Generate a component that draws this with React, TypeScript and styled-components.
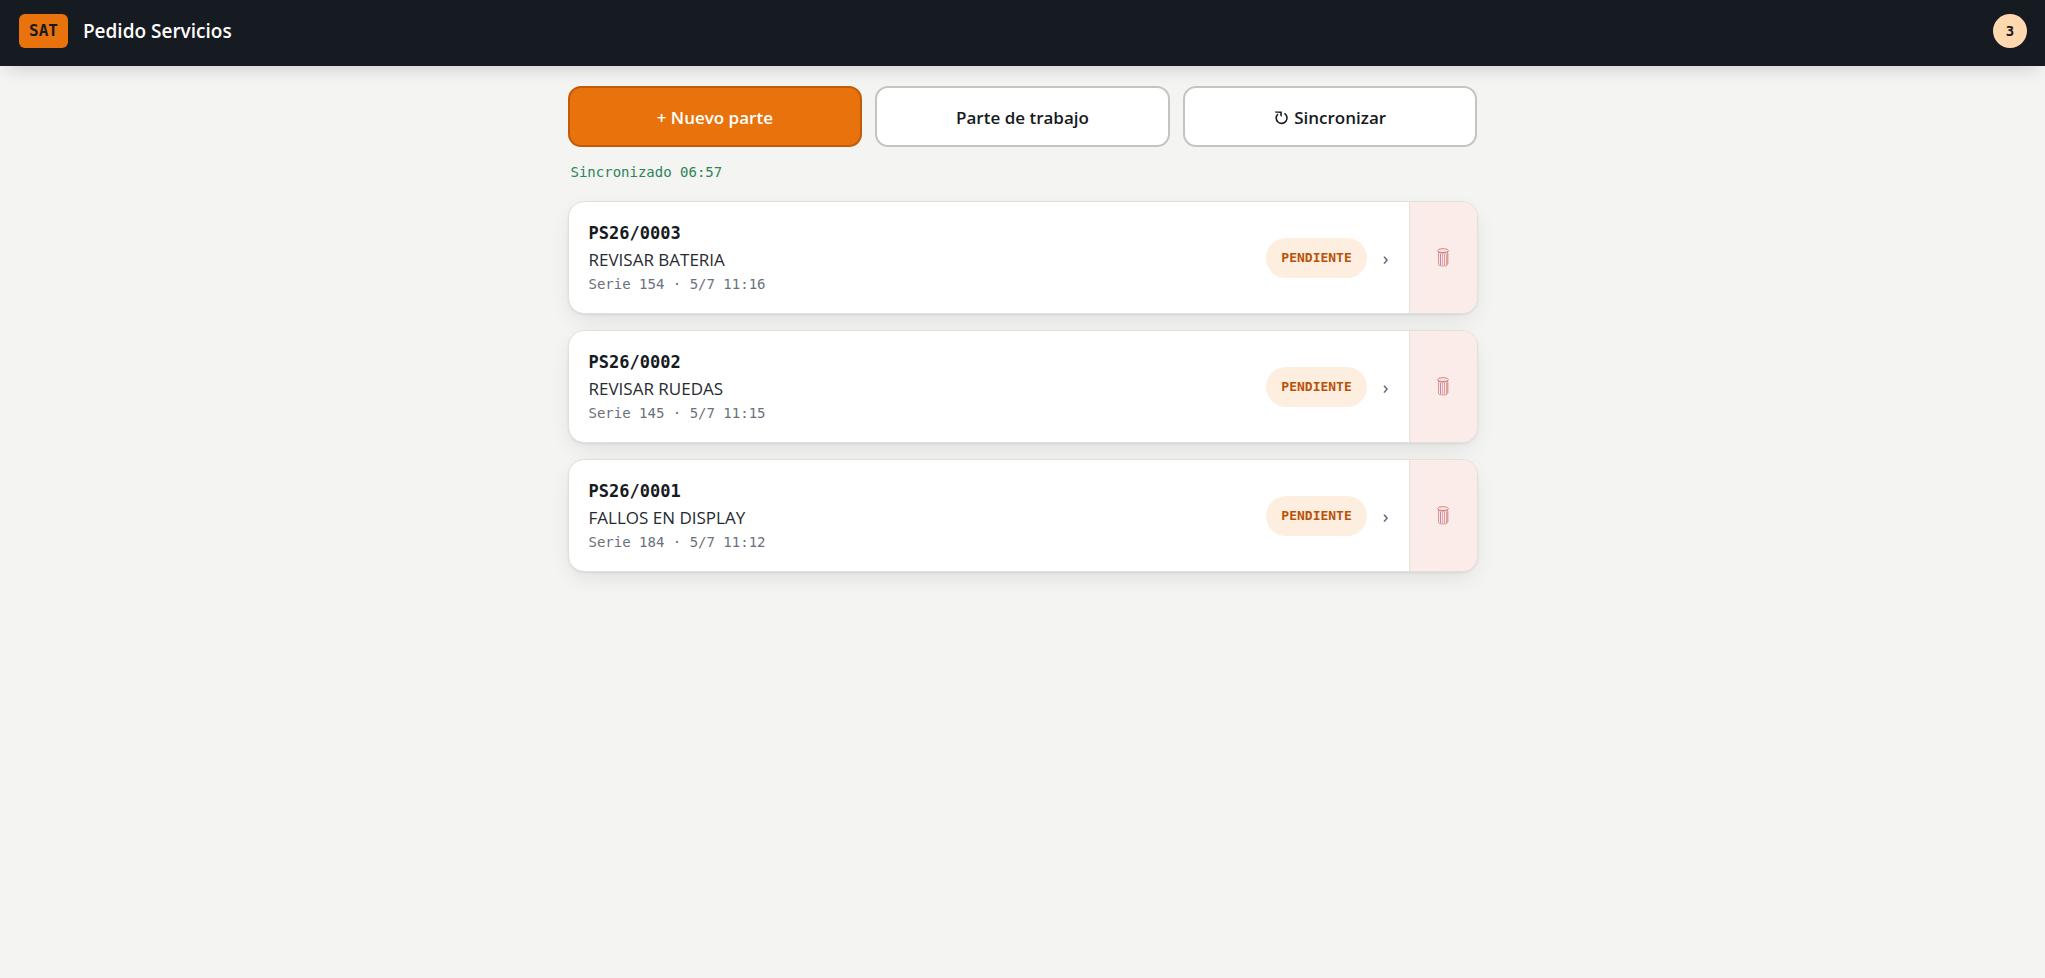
import React from "react";
import styled, { createGlobalStyle } from "styled-components";

const sans = `"Open Sans", "Noto Sans", sans-serif`;
const mono = `"DejaVu Sans Mono", "Liberation Mono", monospace`;

const GlobalStyle = createGlobalStyle`
  *, *::before, *::after { box-sizing: border-box; }
  body { margin: 0; background: #f4f4f2; color: #161a21; font-family: ${sans}; }
  button { font: inherit; color: inherit; cursor: pointer; }
`;

const Header = styled.header`
  display: flex;
  align-items: center;
  gap: 15px;
  padding: 13px 18px 17px 19px;
  background: #161a21;
  box-shadow: 0 8px 20px -8px rgba(22, 26, 33, 0.22);
`;

const Logo = styled.span`
  padding: 0 10px;
  border-radius: 6px;
  background: #e8730c;
  color: #161a21;
  font: 700 16px/34px ${mono};
`;

const AppTitle = styled.h1`
  flex: 1;
  margin: 0;
  color: #fff;
  font-size: 19px;
  font-weight: 600;
  line-height: 36px;
`;

const Counter = styled.span`
  width: 34px;
  border-radius: 50%;
  background: #ffd8b0;
  color: #161a21;
  font: 700 14px/34px ${mono};
  text-align: center;
`;

const Main = styled.main`
  max-width: 912px;
  margin: 0 auto;
  padding: 20px 1px;
`;

const Actions = styled.div`
  display: grid;
  grid-template-columns: repeat(3, 1fr);
  gap: 13px;
`;

const ActionButton = styled.button<{ $primary?: boolean }>`
  display: flex;
  align-items: center;
  justify-content: center;
  gap: 5px;
  padding: 17px 16px 15px;
  border: 2px solid ${(p) => (p.$primary ? "#c25a08" : "#c2c6bf")};
  border-radius: 13px;
  background: ${(p) => (p.$primary ? "#e8730c" : "#fff")};
  color: ${(p) => (p.$primary ? "#fff" : "#161a21")};
  font-size: 17px;
  font-weight: 600;
  line-height: 25px;
`;

const SyncStatus = styled.p`
  margin: 14px 3px 18px;
  color: #2c8457;
  font: 400 14px/22px ${mono};
`;

const OrderList = styled.ul`
  display: flex;
  flex-direction: column;
  gap: 16px;
  margin: 0;
  padding: 0;
  list-style: none;
`;

const OrderCard = styled.li`
  display: flex;
  overflow: hidden;
  border: 1px solid #dfe1dc;
  border-radius: 16px;
  background: #fff;
  box-shadow: 0 1px 2px rgba(22, 26, 33, 0.08), 0 8px 24px -6px rgba(22, 26, 33, 0.12);
`;

const OrderOpen = styled.button`
  display: flex;
  flex: 1;
  align-items: center;
  padding: 18px 20px;
  border: 0;
  background: none;
  text-align: left;
`;

const OrderText = styled.span`
  display: flex;
  flex: 1;
  flex-direction: column;
`;

const OrderNumber = styled.span`
  font: 700 17px/26px ${mono};
`;

const OrderSubject = styled.span`
  color: #262a31;
  font-size: 17px;
  line-height: 28px;
`;

const OrderMeta = styled.span`
  color: #6a707c;
  font: 400 14px/21px ${mono};
`;

const StatusPill = styled.span`
  padding: 0 15px;
  border-radius: 20px;
  background: #fdeee0;
  color: #b95208;
  font: 700 13px/40px ${mono};
`;

const Chevron = styled.span`
  padding-left: 16px;
  color: #565c68;
  font-size: 19px;
  line-height: 28px;
`;

const DeleteButton = styled.button`
  display: flex;
  align-items: center;
  justify-content: center;
  width: 68px;
  border: 0;
  border-left: 1px solid #e3e3df;
  background: #fbebe9;
`;

const SyncIcon = () => (
  <svg width="15" height="16" viewBox="0 0 15 16" fill="none" aria-hidden="true">
    <path d="M10.4 3.4A5.4 5.4 0 1 1 4 4" stroke="currentColor" strokeWidth="1.6" />
    <path d="M1 1.5h6.8v5.6L6.2 5.6V3L1 2.6z" fill="currentColor" />
  </svg>
);

const TrashIcon = () => (
  <svg width="12" height="19" viewBox="0 0 12 19" fill="none" aria-hidden="true">
    <path d="M1.5 4.5v12c0 2 9 2 9 0v-12" fill="#f9e4e3" stroke="#d99a90" />
    <path d="M3.5 6v11" stroke="#bd82c8" />
    <path d="M5.5 6v11.5" stroke="#e9ab98" />
    <path d="M7.5 6v11.5" stroke="#e09aa4" />
    <path d="M9.5 6v11" stroke="#e5a887" />
    <path d="M11 5v11" stroke="#c7a5de" />
    <ellipse cx="6" cy="2.6" rx="5.4" ry="1.9" fill="#fbe6e4" stroke="#d08a86" />
    <path d="M.8 3.6c.6 2 9.8 2 10.4 0" stroke="#cf8481" />
  </svg>
);

const orders = [
  { number: "PS26/0003", subject: "REVISAR BATERIA", meta: "Serie 154 · 5/7 11:16" },
  { number: "PS26/0002", subject: "REVISAR RUEDAS", meta: "Serie 145 · 5/7 11:15" },
  { number: "PS26/0001", subject: "FALLOS EN DISPLAY", meta: "Serie 184 · 5/7 11:12" },
];

export default function App() {
  return (
    <>
      <GlobalStyle />
      <Header>
        <Logo>SAT</Logo>
        <AppTitle>Pedido Servicios</AppTitle>
        <Counter>{orders.length}</Counter>
      </Header>
      <Main>
        <Actions>
          <ActionButton type="button" $primary>+ Nuevo parte</ActionButton>
          <ActionButton type="button">Parte de trabajo</ActionButton>
          <ActionButton type="button">
            <SyncIcon />
            Sincronizar
          </ActionButton>
        </Actions>
        <SyncStatus role="status">Sincronizado 06:57</SyncStatus>
        <OrderList>
          {orders.map((order) => (
            <OrderCard key={order.number}>
              <OrderOpen type="button">
                <OrderText>
                  <OrderNumber>{order.number}</OrderNumber>
                  <OrderSubject>{order.subject}</OrderSubject>
                  <OrderMeta>{order.meta}</OrderMeta>
                </OrderText>
                <StatusPill>PENDIENTE</StatusPill>
                <Chevron aria-hidden="true">›</Chevron>
              </OrderOpen>
              <DeleteButton type="button" aria-label={`Eliminar ${order.number}`}>
                <TrashIcon />
              </DeleteButton>
            </OrderCard>
          ))}
        </OrderList>
      </Main>
    </>
  );
}
